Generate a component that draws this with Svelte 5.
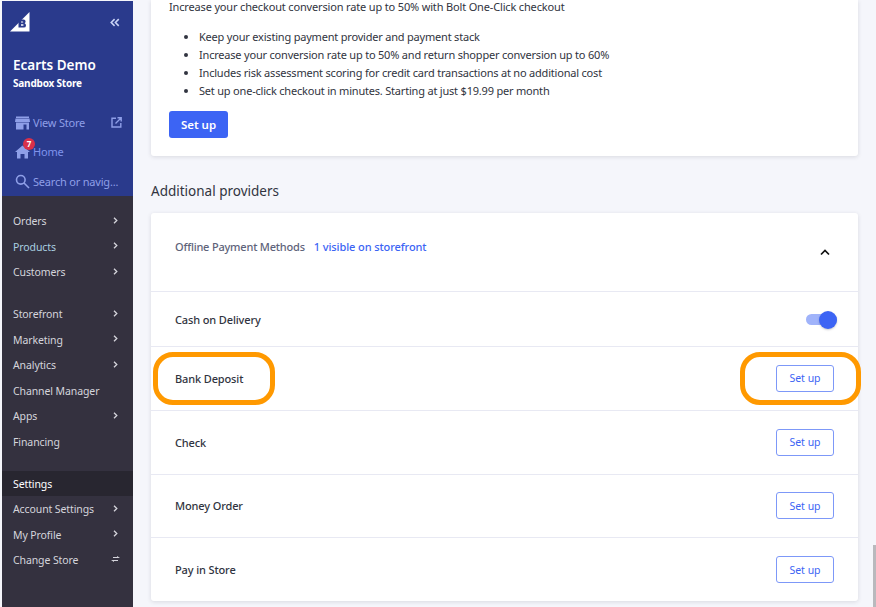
<script>
  const navGroups = [
    [
      { label: 'Orders', arrow: true },
      { label: 'Products', arrow: true, tint: true },
      { label: 'Customers', arrow: true }
    ],
    [
      { label: 'Storefront', arrow: true },
      { label: 'Marketing', arrow: true },
      { label: 'Analytics', arrow: true },
      { label: 'Channel Manager' },
      { label: 'Apps', arrow: true },
      { label: 'Financing' }
    ]
  ];

  const bullets = [
    'Keep your existing payment provider and payment stack',
    'Increase your conversion rate up to 50% and return shopper conversion up to 60%',
    'Includes risk assessment scoring for credit card transactions at no additional cost',
    'Set up one-click checkout in minutes. Starting at just $19.99 per month'
  ];

  const methods = [
    { name: 'Bank Deposit', marked: true },
    { name: 'Check' },
    { name: 'Money Order' },
    { name: 'Pay in Store' }
  ];
</script>

<div class="page">
  <aside class="sidebar">
    <div class="brand">
      <div class="logo-row">
        <svg class="logo" width="20" height="20" viewBox="0 0 20 20">
          <path d="M19.5 0 V19.5 H0 Z" fill="#fff" />
          <path d="M8.5 7.5 H13.5 Q15.6 7.5 15.6 9.6 Q15.6 10.8 14.6 11.3 Q16 11.8 16 13.4 Q16 15.6 13.6 15.6 H8.5 Z M11 9.4 V10.6 H12.7 Q13.3 10.6 13.3 10 Q13.3 9.4 12.7 9.4 Z M11 12.3 V13.7 H13 Q13.6 13.7 13.6 13 Q13.6 12.3 13 12.3 Z" fill="#2a3a8c" fill-rule="evenodd" />
        </svg>
        <svg class="collapse" width="10" height="9" viewBox="0 0 12 10" fill="none" stroke="#c9d2f5" stroke-width="1.9">
          <path d="M5.5 1 L1.5 5 L5.5 9 M10.5 1 L6.5 5 L10.5 9" />
        </svg>
      </div>
      <div class="store-name">Ecarts Demo</div>
      <div class="store-type">Sandbox Store</div>
      <div class="quick first">
        <svg width="15" height="14" viewBox="0 0 15 14" fill="#8f9fe8">
          <path d="M1 0.5 H14 V2 H1 Z M0.5 2.5 H14.5 L15 6 H0 Z M1 6.5 H14 V13.5 H11.5 V8.5 H8.5 V13.5 H1 Z" />
        </svg>
        <span>View Store</span>
        <svg class="external" width="11" height="11" viewBox="0 0 11 11" fill="none" stroke="#8f9fe8" stroke-width="1.4">
          <path d="M5 1.2 H1 V10 H9.8 V6 M6.5 0.8 H10.2 V4.5 M10 1 L4.5 6.5" />
        </svg>
      </div>
      <div class="quick home">
        <svg width="15" height="14" viewBox="0 0 15 14" fill="#8f9fe8">
          <path d="M7.5 0.5 L15 7 H13 V13.5 H9.5 V9 H5.5 V13.5 H2 V7 H0 Z" />
        </svg>
        <span>Home</span>
        <b class="badge">7</b>
      </div>
      <div class="quick search">
        <svg width="15" height="15" viewBox="0 0 15 15" fill="none" stroke="#8f9fe8" stroke-width="1.6">
          <circle cx="5.8" cy="5.8" r="4.3" />
          <path d="M9 9 L14 14" />
        </svg>
        <span>Search or navig...</span>
      </div>
    </div>

    <nav class="nav">
      {#each navGroups as group}
        <ul>
          {#each group as item}
            <li class:tint={item.tint}>
              <span>{item.label}</span>
              {#if item.arrow}
                <svg width="5" height="7" viewBox="0 0 5 7" fill="none" stroke="#d5d5dc" stroke-width="1.3"><path d="M1 0.8 L3.8 3.5 L1 6.2" /></svg>
              {/if}
            </li>
          {/each}
        </ul>
      {/each}
      <ul class="settings">
        <li class="active"><span>Settings</span></li>
        <li><span>Account Settings</span><svg width="5" height="7" viewBox="0 0 5 7" fill="none" stroke="#d5d5dc" stroke-width="1.3"><path d="M1 0.8 L3.8 3.5 L1 6.2" /></svg></li>
        <li><span>My Profile</span><svg width="5" height="7" viewBox="0 0 5 7" fill="none" stroke="#d5d5dc" stroke-width="1.3"><path d="M1 0.8 L3.8 3.5 L1 6.2" /></svg></li>
        <li>
          <span>Change Store</span>
          <svg class="swap" width="9" height="6" viewBox="0 0 9 6" fill="#d5d5dc"><path d="M2 1 H6 V0 L9 2 H2 Z M7 4 V5 H3 V6 L0 4 Z" /></svg>
        </li>
      </ul>
    </nav>
  </aside>

  <main class="content">
    <section class="card promo">
      <p>Increase your checkout conversion rate up to 50% with Bolt One-Click checkout</p>
      <ul>
        {#each bullets as bullet}
          <li>{bullet}</li>
        {/each}
      </ul>
      <button class="primary" type="button">Set up</button>
    </section>

    <h2>Additional providers</h2>

    <section class="card methods">
      <header>
        <strong>Offline Payment Methods</strong>
        <span>1 visible on storefront</span>
        <svg width="10" height="7" viewBox="0 0 10 7" fill="none" stroke="#111" stroke-width="1.7"><path d="M1 5.5 L5 1.5 L9 5.5" /></svg>
      </header>
      <div class="row cash">
        <span class="name">Cash on Delivery</span>
        <div class="toggle"><i></i></div>
      </div>
      {#each methods as method}
        <div class="row">
          <span class="name">{method.name}</span>
          <button class="outline" type="button">Set up</button>
          {#if method.marked}
            <i class="ring ring-left"></i>
            <i class="ring ring-right"></i>
          {/if}
        </div>
      {/each}
    </section>
  </main>
  <div class="scroll-thumb"></div>
</div>

<style>
  :global(body) {
    background: #f5f6fb;
  }

  .page {
    position: relative;
    display: flex;
    width: 876px;
    height: 607px;
    overflow: hidden;
    font-family: "Noto Sans", "Open Sans", sans-serif;
    font-size: 11px;
    letter-spacing: -0.2px;
    color: #313440;
    background: #f5f6fb;
  }

  .sidebar {
    display: flex;
    flex-direction: column;
    width: 131px;
    margin-left: 2px;
    margin-top: 1px;
    background: #34313f;
    flex: none;
  }

  .brand {
    height: 195px;
    padding: 11px 0 0 11px;
    background: #2a3a8c;
    box-sizing: border-box;
  }

  .logo-row {
    display: flex;
    align-items: center;
    justify-content: space-between;
    padding-right: 13px;
    height: 20px;
  }

  .logo {
    margin-left: -3px;
  }

  .store-name {
    margin-top: 24px;
    font-size: 13.5px;
    font-weight: 600;
    line-height: 18px;
    letter-spacing: 0;
    color: #fff;
  }

  .store-type {
    margin-top: 2px;
    font-size: 10px;
    font-weight: 700;
    line-height: 14px;
    color: #fff;
  }

  .quick {
    position: relative;
    display: flex;
    align-items: center;
    gap: 3px;
    margin-left: 2px;
    height: 29.5px;
    font-size: 11px;
    color: #8f9fe8;
  }

  .quick.first {
    margin-top: 18px;
  }

  .quick.home span {
    margin-top: -2px;
    color: #7f93ec;
  }

  .quick.search span {
    white-space: nowrap;
  }

  .external {
    margin-left: auto;
    margin-right: 11px;
  }

  .badge {
    position: absolute;
    left: 8px;
    top: 0;
    width: 12px;
    height: 12px;
    border-radius: 50%;
    background: #d9304a;
    color: #fff;
    font-size: 8px;
    line-height: 12px;
    letter-spacing: 0;
    text-align: center;
  }

  .nav ul {
    margin: 0;
    padding: 0;
    list-style: none;
  }

  .nav ul + ul {
    margin-top: 16.5px;
  }

  .nav {
    padding-top: 12.4px;
  }

  .nav li {
    display: flex;
    align-items: center;
    justify-content: space-between;
    height: 25.5px;
    padding: 0 15px 0 11px;
    font-size: 10.5px;
    letter-spacing: -0.1px;
    color: #d5d5dc;
  }

  .nav li svg {
    margin-top: -2px;
  }

  .nav li.tint {
    color: #a9cfe0;
  }

  .nav li.active {
    background: #282630;
    color: #fff;
  }

  .nav li .swap {
    margin-right: -2px;
  }

  .content {
    flex: 1;
    min-width: 0;
    padding: 0 18px 0 18px;
  }

  .card {
    background: #fff;
    border-radius: 3px;
    box-shadow: 0 1px 4px rgba(49, 52, 64, 0.14);
  }

  .promo {
    height: 156px;
    padding: 0 18px;
    box-sizing: border-box;
    border-radius: 0 0 3px 3px;
  }

  .promo p {
    margin: 0;
    line-height: 13px;
    letter-spacing: -0.16px;
  }

  .promo ul {
    margin: 15px 0 0;
    padding: 0 0 0 30px;
    line-height: 18px;
  }

  .primary {
    display: block;
    margin-top: 11px;
    width: 59px;
    height: 27px;
    padding: 0;
    border: none;
    border-radius: 3px;
    background: #3c64f4;
    color: #fff;
    font: 600 11.5px "Noto Sans", sans-serif;
  }

  h2 {
    margin: 0;
    padding: 26px 0 12px;
    height: 19px;
    font-size: 13.5px;
    font-weight: 400;
    line-height: 19px;
    letter-spacing: 0;
    color: #313440;
  }

  .methods header {
    display: flex;
    align-items: flex-start;
    height: 78px;
    padding: 27px 28px 0 24px;
    box-sizing: border-box;
  }

  .methods header strong {
    font-weight: 500;
    color: #5e637a;
    line-height: 14px;
  }

  .methods header span {
    margin-left: 9px;
    color: #3c64f4;
    font-weight: 500;
    line-height: 14px;
    letter-spacing: -0.1px;
  }

  .methods header svg {
    margin-left: auto;
    margin-top: 9px;
  }

  .row {
    position: relative;
    display: flex;
    align-items: center;
    justify-content: space-between;
    height: 63.8px;
    padding: 0 24px;
    border-top: 1px solid #e8e9f3;
    box-sizing: border-box;
  }

  .row.cash {
    height: 55px;
  }

  .name {
    font-weight: 500;
    letter-spacing: -0.13px;
    color: #313440;
  }

  .outline {
    width: 58px;
    height: 27px;
    padding: 0;
    border: 1px solid #7d98f8;
    border-radius: 3px;
    background: #fff;
    color: #3c64f4;
    font: 400 10.5px "Noto Sans", sans-serif;
  }

  .toggle {
    position: relative;
    width: 31px;
    height: 11px;
    margin-right: -3px;
    border-radius: 6px;
    background: #a0b3fa;
  }

  .toggle i {
    position: absolute;
    right: 0;
    top: -3px;
    width: 18px;
    height: 18px;
    border-radius: 50%;
    background: #3c64f4;
    box-shadow: 0 1px 2px rgba(49, 52, 64, 0.25);
  }

  .ring {
    position: absolute;
    top: 4.5px;
    height: 43px;
    border: 5px solid #ff9900;
    border-radius: 20px;
  }

  .ring-left {
    left: 2px;
    width: 112px;
  }

  .ring-right {
    right: -3px;
    width: 111px;
  }

  .scroll-thumb {
    position: absolute;
    right: 0;
    bottom: 0;
    width: 3px;
    height: 62px;
    background: #b9b9bd;
  }
</style>
